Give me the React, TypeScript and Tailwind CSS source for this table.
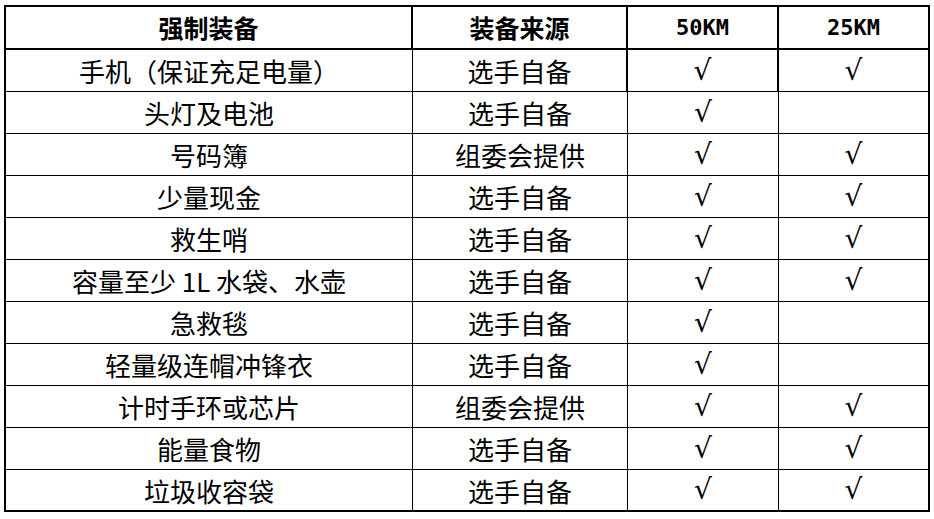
import React from "react";

const rows: [string, string, boolean, boolean][] = [
  ["手机（保证充足电量）", "选手自备", true, true],
  ["头灯及电池", "选手自备", true, false],
  ["号码簿", "组委会提供", true, true],
  ["少量现金", "选手自备", true, true],
  ["救生哨", "选手自备", true, true],
  ["容量至少 1L 水袋、水壶", "选手自备", true, true],
  ["急救毯", "选手自备", true, false],
  ["轻量级连帽冲锋衣", "选手自备", true, false],
  ["计时手环或芯片", "组委会提供", true, true],
  ["能量食物", "选手自备", true, true],
  ["垃圾收容袋", "选手自备", true, true],
];

const cjk = { fontFamily: '"Noto Sans CJK SC", "Noto Sans", sans-serif' };
const mono = { fontFamily: '"DejaVu Sans Mono", "Noto Sans CJK SC", monospace' };
const chk = { fontFamily: '"DejaVu Sans", "Noto Sans CJK SC", sans-serif' };

export default function App() {
  return (
    <div className="w-[934px] h-[519px] bg-white pt-[5px] pl-[4px] text-black" style={cjk}>
      <div className="grid grid-cols-[409px_215px_151px_151px]">
        <div className="h-[45px] border-t-2 border-l-2 border-b-2 border-r-2 border-black flex items-center justify-center text-[25px] font-bold">强制装备</div>
        <div className="h-[45px] border-t-2 border-b-2 border-r-2 border-black flex items-center justify-center text-[25px] font-bold">装备来源</div>
        <div className="h-[45px] border-t-2 border-b-2 border-r-2 border-black flex items-center justify-center text-[22px] font-bold" style={mono}>50KM</div>
        <div className="h-[45px] border-t-2 border-b-2 border-r-2 border-black flex items-center justify-center text-[22px] font-bold" style={mono}>25KM</div>
        {rows.map(([name, src, a, b], i) => {
          const first = i === 0;
          const last = i === rows.length - 1;
          const bb = last ? "border-b-2" : "border-b";
          return (
            <React.Fragment key={i}>
              <div className={`h-[42px] border-l-2 border-r ${bb} border-black flex items-center justify-center text-[26px]`}>{name}</div>
              <div className={`h-[42px] ${first ? "border-r-2" : "border-r"} ${bb} border-black flex items-center justify-center text-[26px]`}>{src}</div>
              <div className={`h-[42px] ${first ? "border-r-2" : "border-r"} ${bb} border-black flex items-center justify-center text-[28px] leading-none`} style={chk}>{a ? "√" : ""}</div>
              <div className={`h-[42px] border-r-2 ${bb} border-black flex items-center justify-center text-[28px] leading-none`} style={chk}>{b ? "√" : ""}</div>
            </React.Fragment>
          );
        })}
      </div>
    </div>
  );
}
